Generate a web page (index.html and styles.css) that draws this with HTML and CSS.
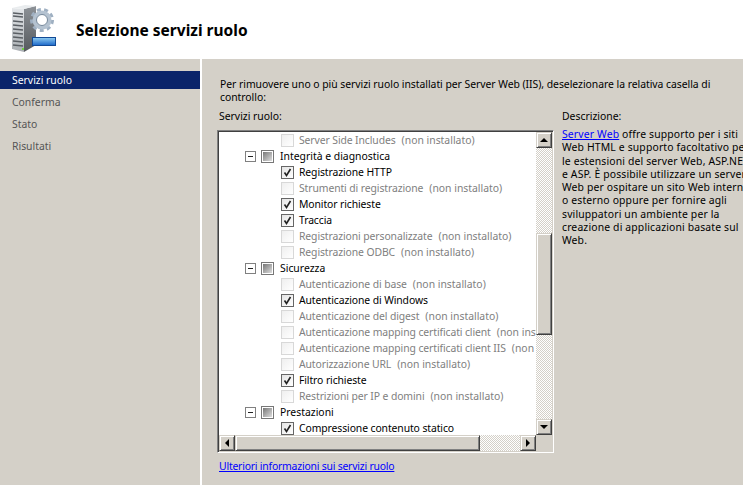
FILE: index.html
```html
<!DOCTYPE html>
<html>
    <head>
        <link rel="stylesheet" href="styles.css">
    </head>
    <body>
        <div class="header">
            <svg class="wizard-icon" width="48" height="52" viewBox="11 2 48 52">
                <defs>
                    <linearGradient id="front" x1="0" x2="0" y1="0" y2="1">
                        <stop offset="0" stop-color="#e4e7ea"/>
                        <stop offset="1" stop-color="#a9aeb2"/>
                    </linearGradient>
                    <linearGradient id="side" x1="0" x2="0" y1="0" y2="1">
                        <stop offset="0" stop-color="#8d9297"/>
                        <stop offset="1" stop-color="#55595d"/>
                    </linearGradient>
                    <linearGradient id="bar" x1="0" x2="0" y1="0" y2="1">
                        <stop offset="0" stop-color="#8fcdf2"/>
                        <stop offset="1" stop-color="#1a66c8"/>
                    </linearGradient>
                </defs>
                <!-- server -->
                <path d="M12 6 L24 7 L24 50 L12 47 Z" fill="url(#front)"/>
                <path d="M24 7 L36 4 L36 43 L24 50 Z" fill="url(#side)"/>
                <path d="M12 6 L25 3 L36 4 L24 7 Z" fill="#e9ecee"/>
                <path d="M13 11 L23 12 M13 14 L23 15 M13 19 L23 20 M13 23 L23 24 M13 27 L23 28 M13 31 L23 32 M13 35 L23 36 M13 39 L23 40 M13 43 L23 44" stroke="#5a5f64" stroke-width="1.4"/>
                <rect x="22" y="46" width="2" height="2" fill="#6fd13f"/>
                <!-- gear -->
                <circle cx="42" cy="18" r="10.5" fill="none" stroke="#9fb0c2" stroke-width="3" stroke-dasharray="4 3.33"/>
                <circle cx="42" cy="18" r="7.5" fill="none" stroke="#b4c2d0" stroke-width="4"/>
                <circle cx="42" cy="18" r="5.5" fill="#fff" stroke="#74879a"/>
                <!-- blue bar -->
                <rect x="32.5" y="35.5" width="23" height="8" fill="url(#bar)" stroke="#124a96"/>
            </svg>
            <h1>Selezione servizi ruolo</h1>
        </div>
        <div class="main">
            <div class="sidebar">
                <div class="step selected">Servizi ruolo</div>
                <div class="step">Conferma</div>
                <div class="step">Stato</div>
                <div class="step">Risultati</div>
            </div>
            <div class="content">
                <p class="intro">Per rimuovere uno o più servizi ruolo installati per Server Web (IIS), deselezionare la relativa casella di controllo:</p>
                <div class="columns">
                    <div class="left-col">
                        <div class="list-label">Servizi ruolo:</div>
                        <div class="list-box">
                            <div class="list-area">
                                <div class="rows">
                                    <div class="row level2 off"><span class="check"></span><span class="name">Server Side Includes</span><span class="note">(non installato)</span></div>
                                    <div class="row level1"><span class="toggle"></span><span class="check mixed"></span><span class="name">Integrità e diagnostica</span></div>
                                    <div class="row level2"><span class="check on"><svg width="9" height="9" viewBox="0 0 9 9"><path d="M1.5 4.5 L3.5 7.5 L7.5 1" fill="none" stroke="#222" stroke-width="1.6"/></svg></span><span class="name">Registrazione HTTP</span></div>
                                    <div class="row level2 off"><span class="check"></span><span class="name">Strumenti di registrazione</span><span class="note">(non installato)</span></div>
                                    <div class="row level2"><span class="check on"><svg width="9" height="9" viewBox="0 0 9 9"><path d="M1.5 4.5 L3.5 7.5 L7.5 1" fill="none" stroke="#222" stroke-width="1.6"/></svg></span><span class="name">Monitor richieste</span></div>
                                    <div class="row level2"><span class="check on"><svg width="9" height="9" viewBox="0 0 9 9"><path d="M1.5 4.5 L3.5 7.5 L7.5 1" fill="none" stroke="#222" stroke-width="1.6"/></svg></span><span class="name">Traccia</span></div>
                                    <div class="row level2 off"><span class="check"></span><span class="name">Registrazioni personalizzate</span><span class="note">(non installato)</span></div>
                                    <div class="row level2 off"><span class="check"></span><span class="name">Registrazione ODBC</span><span class="note">(non installato)</span></div>
                                    <div class="row level1"><span class="toggle"></span><span class="check mixed"></span><span class="name">Sicurezza</span></div>
                                    <div class="row level2 off"><span class="check"></span><span class="name">Autenticazione di base</span><span class="note">(non installato)</span></div>
                                    <div class="row level2"><span class="check on"><svg width="9" height="9" viewBox="0 0 9 9"><path d="M1.5 4.5 L3.5 7.5 L7.5 1" fill="none" stroke="#222" stroke-width="1.6"/></svg></span><span class="name">Autenticazione di Windows</span></div>
                                    <div class="row level2 off"><span class="check"></span><span class="name">Autenticazione del digest</span><span class="note">(non installato)</span></div>
                                    <div class="row level2 off"><span class="check"></span><span class="name">Autenticazione mapping certificati client</span><span class="note">(non installato)</span></div>
                                    <div class="row level2 off"><span class="check"></span><span class="name">Autenticazione mapping certificati client IIS</span><span class="note">(non installato)</span></div>
                                    <div class="row level2 off"><span class="check"></span><span class="name">Autorizzazione URL</span><span class="note">(non installato)</span></div>
                                    <div class="row level2"><span class="check on"><svg width="9" height="9" viewBox="0 0 9 9"><path d="M1.5 4.5 L3.5 7.5 L7.5 1" fill="none" stroke="#222" stroke-width="1.6"/></svg></span><span class="name">Filtro richieste</span></div>
                                    <div class="row level2 off"><span class="check"></span><span class="name">Restrizioni per IP e domini</span><span class="note">(non installato)</span></div>
                                    <div class="row level1"><span class="toggle"></span><span class="check mixed"></span><span class="name">Prestazioni</span></div>
                                    <div class="row level2"><span class="check on"><svg width="9" height="9" viewBox="0 0 9 9"><path d="M1.5 4.5 L3.5 7.5 L7.5 1" fill="none" stroke="#222" stroke-width="1.6"/></svg></span><span class="name">Compressione contenuto statico</span></div>
                                </div>
                                <div class="v-scroll">
                                    <div class="sb-btn"><span class="arrow up"></span></div>
                                    <div class="sb-track v-before"></div>
                                    <div class="sb-thumb v-thumb"></div>
                                    <div class="sb-track v-after"></div>
                                    <div class="sb-btn"><span class="arrow down"></span></div>
                                </div>
                            </div>
                            <div class="h-scroll">
                                <div class="sb-btn"><span class="arrow left"></span></div>
                                <div class="sb-thumb h-thumb"></div>
                                <div class="sb-track h-after"></div>
                                <div class="sb-btn"><span class="arrow right"></span></div>
                                <div class="sb-corner"></div>
                            </div>
                        </div>
                        <a class="more-link" href="#">Ulteriori informazioni sui servizi ruolo</a>
                    </div>
                    <div class="desc-col">
                        <div class="desc-label">Descrizione:</div>
                        <div class="desc-text"><a href="#">Server Web</a> offre supporto per i siti Web HTML e supporto facoltativo per le estensioni del server Web, ASP.NET e ASP. È possibile utilizzare un server Web per ospitare un sito Web interno o esterno oppure per fornire agli sviluppatori un ambiente per la creazione di applicazioni basate sul Web.</div>
                    </div>
                </div>
            </div>
        </div>
    </body>
</html>
```

FILE: styles.css
```css
html, body {
    margin: 0;
    padding: 0;
    height: 100%;
    overflow: hidden;
}
body {
    font-family: "Noto Sans", sans-serif;
    font-size: 10.4px;
    color: #000;
    background-color: #d4d0c8;
    display: flex;
    flex-direction: column;
}
a {
    color: #0000ff;
}
.header {
    height: 59px;
    background-color: #fff;
    display: flex;
    align-items: center;
    flex-shrink: 0;
}
.wizard-icon {
    margin-left: 11px;
    margin-right: 17px;
}
h1 {
    margin: 0;
    font-size: 15.5px;
    font-weight: bold;
}
.main {
    flex: 1;
    display: flex;
    min-height: 0;
}
.sidebar {
    width: 200px;
    padding-top: 12px;
    flex-shrink: 0;
}
.step {
    height: 18px;
    line-height: 18px;
    padding-left: 12px;
    margin-bottom: 4px;
    color: #555;
}
.step.selected {
    background-color: #0a246a;
    color: #fff;
}
.content {
    flex: 1;
    min-width: 0;
    border-left: 2px solid #fff;
    padding: 19px 0 0 18px;
}
.intro {
    margin: 0 20px 0 0;
    line-height: 13px;
    letter-spacing: -0.035px;
}
.columns {
    display: flex;
    margin-top: 6px;
}
.left-col {
    width: 334px;
    flex-shrink: 0;
}
.list-label {
    height: 20px;
    line-height: 13px;
    margin-left: -1px;
}
.list-box {
    box-sizing: border-box;
    width: 337px;
    height: 323px;
    margin-left: -3px;
    border-top: 1px solid #808080;
    border-left: 1px solid #808080;
    border-right: 1px solid #fff;
    border-bottom: 1px solid #fff;
    box-shadow: inset 1px 1px 0 #404040, inset -1px -1px 0 #d4d0c8;
    padding: 1px;
    background-color: #fff;
    display: flex;
    flex-direction: column;
}
.list-area {
    flex: 1;
    display: flex;
    min-height: 0;
}
.rows {
    flex: 1;
    min-width: 0;
    overflow: hidden;
    background-color: #fff;
}
.row {
    height: 16px;
    display: flex;
    align-items: center;
    white-space: nowrap;
}
.level1 {
    padding-left: 26px;
}
.level2 {
    padding-left: 62px;
}
.off {
    color: #808080;
}
.name {
    margin-left: 5px;
    letter-spacing: -0.1px;
}
.level1 .name {
    margin-left: 6px;
    letter-spacing: 0;
}
.note {
    margin-left: 6px;
    color: #808080;
}
.toggle {
    width: 9px;
    height: 9px;
    border: 1px solid #808080;
    margin-right: 5px;
    flex-shrink: 0;
    background: linear-gradient(#222, #222) center / 5px 1px no-repeat;
}
.check {
    width: 11px;
    height: 11px;
    border: 1px solid #808080;
    background-color: #fff;
    flex-shrink: 0;
    display: flex;
    align-items: center;
    justify-content: center;
}
.off .check {
    border-color: #d8d8d8;
    background: linear-gradient(135deg, #efefef, #fff);
}
.check.on {
    border-color: #666;
    background: linear-gradient(135deg, #e4e4e4, #fff);
}
.check.mixed {
    background: linear-gradient(135deg, #777, #ddd) center / 9px 9px no-repeat, #fff;
    border-color: #777;
}
.v-scroll {
    width: 16px;
    flex-shrink: 0;
    display: flex;
    flex-direction: column;
}
.h-scroll {
    height: 16px;
    flex-shrink: 0;
    display: flex;
}
.sb-btn, .sb-thumb {
    box-sizing: border-box;
    flex-shrink: 0;
    background-color: #d4d0c8;
    border-top: 1px solid #d4d0c8;
    border-left: 1px solid #d4d0c8;
    border-right: 1px solid #404040;
    border-bottom: 1px solid #404040;
    box-shadow: inset 1px 1px 0 #fff, inset -1px -1px 0 #808080;
}
.sb-btn {
    width: 16px;
    height: 16px;
    display: flex;
    align-items: center;
    justify-content: center;
}
.sb-track {
    background-image: repeating-conic-gradient(#d4d0c8 0 25%, #fff 0 50%);
    background-size: 2px 2px;
}
.v-before {
    height: 85px;
}
.v-thumb {
    height: 102px;
}
.v-after {
    flex: 1;
}
.h-thumb {
    width: 245px;
}
.h-after {
    flex: 1;
}
.sb-corner {
    width: 16px;
    flex-shrink: 0;
    background-color: #d4d0c8;
}
.arrow {
    width: 0;
    height: 0;
    border-style: solid;
    border-color: transparent;
}
.arrow.up {
    border-width: 0 4px 4px;
    border-bottom-color: #000;
}
.arrow.down {
    border-width: 4px 4px 0;
    border-top-color: #000;
}
.arrow.left {
    border-width: 4px 4px 4px 0;
    border-right-color: #000;
}
.arrow.right {
    border-width: 4px 0 4px 4px;
    border-left-color: #000;
}
.more-link {
    display: block;
    margin-top: 6px;
    margin-left: -1px;
    line-height: 14px;
    letter-spacing: -0.2px;
}
.desc-col {
    width: 194px;
    flex-shrink: 0;
    margin-left: 8px;
}
.desc-label {
    height: 18px;
    line-height: 13px;
}
.desc-text {
    line-height: 13.3px;
    letter-spacing: 0.15px;
}
```
